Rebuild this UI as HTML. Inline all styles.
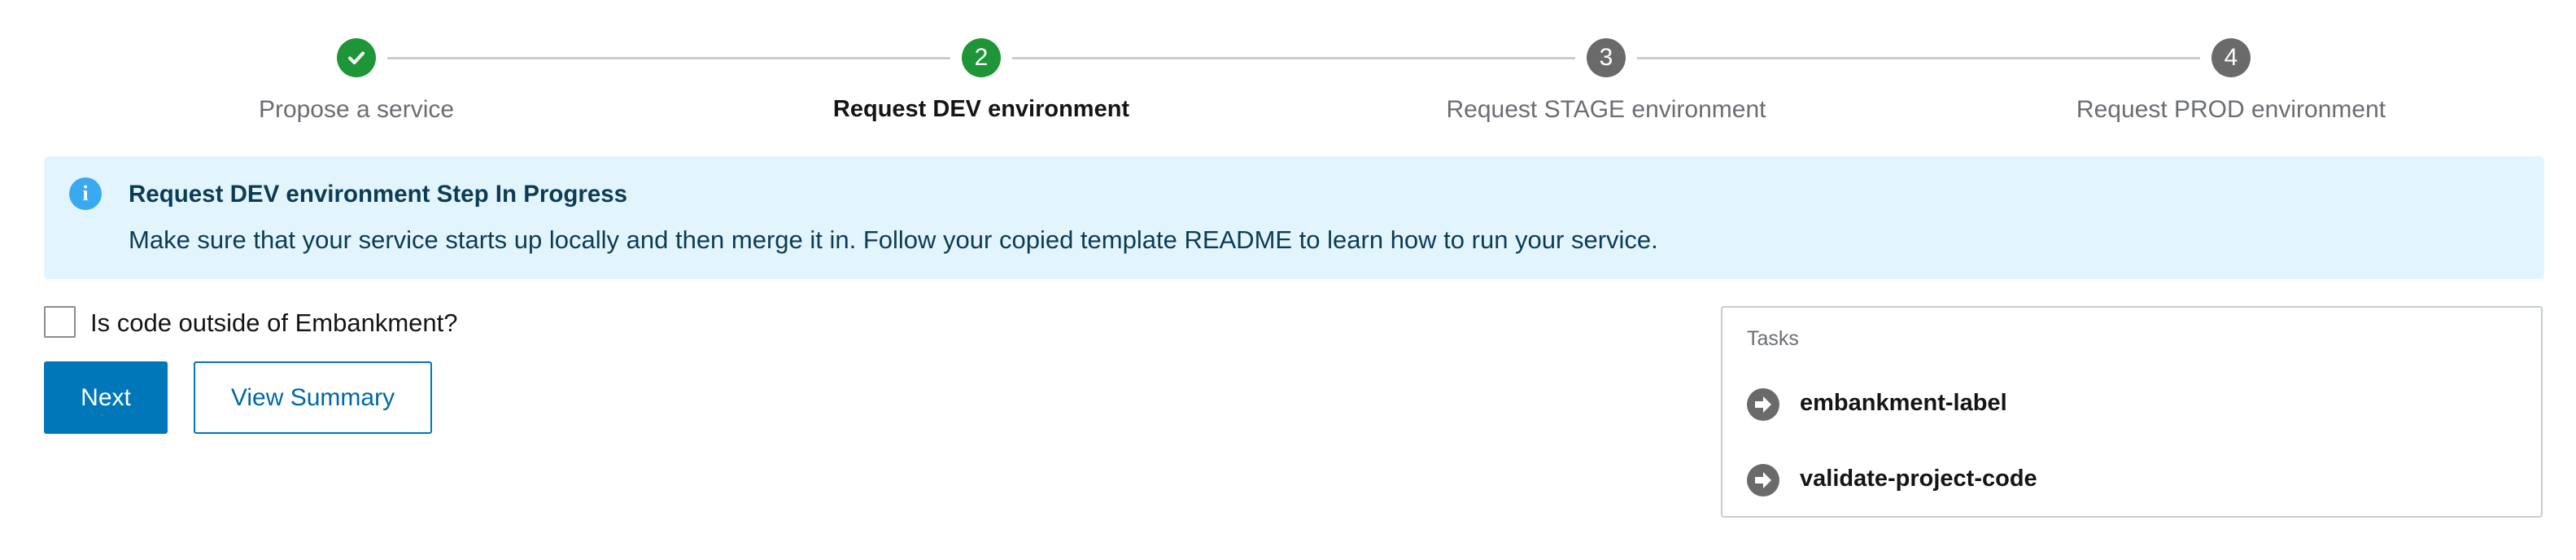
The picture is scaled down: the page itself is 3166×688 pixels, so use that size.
<!DOCTYPE html>
<html><head><meta charset="utf-8"><style>
*{box-sizing:border-box;margin:0;padding:0}
body{width:3166px;height:688px;background:#fff;font-family:"Liberation Sans",sans-serif;position:relative;overflow:hidden}
.abs{position:absolute}
.circ{position:absolute;width:48px;height:48px;border-radius:50%;top:47px;color:#fff;font-size:30px;text-align:center;line-height:48px}
.line{position:absolute;top:70px;height:3px;background:#c9cdd1}
.lbl{position:absolute;top:118px;font-size:30px;color:#6a6e73;transform:translateX(-50%);white-space:nowrap}
</style></head><body>
<div class="line" style="left:476px;width:692px"></div>
<div class="line" style="left:1244px;width:692px"></div>
<div class="line" style="left:2012px;width:692px"></div>
<div class="circ" style="left:414px;background:#1e9637"><svg width="48" height="48" viewBox="0 0 48 48"><path d="M16 24.5l5.5 5.5L32 18.5" fill="none" stroke="#fff" stroke-width="4" stroke-linecap="round" stroke-linejoin="round"/></svg></div>
<div class="circ" style="left:1182px;background:#1e9637">2</div>
<div class="circ" style="left:1950px;background:#6a6a6a">3</div>
<div class="circ" style="left:2718px;background:#6a6a6a">4</div>
<div class="lbl" style="left:438px">Propose a service</div>
<div class="lbl" style="left:1206px;color:#151515;font-weight:bold;font-size:29px">Request DEV environment</div>
<div class="lbl" style="left:1974px">Request STAGE environment</div>
<div class="lbl" style="left:2742px">Request PROD environment</div>

<div class="abs" style="left:54px;top:192px;width:3073px;height:151px;background:#e3f5fc;border-radius:6px"></div>
<div class="abs" style="left:85px;top:218px;width:40px;height:40px;border-radius:50%;background:#3aa9f0;color:#fff;font-weight:bold;font-size:26px;text-align:center;line-height:40px;font-family:'Liberation Serif',serif">i</div>
<div class="abs" style="left:158px;top:222px;font-size:29.5px;font-weight:bold;color:#0c3c55;white-space:nowrap">Request DEV environment Step In Progress</div>
<div class="abs" style="left:158px;top:277px;font-size:31px;color:#0c3c55;white-space:nowrap">Make sure that your service starts up locally and then merge it in. Follow your copied template README to learn how to run your service.</div>

<div class="abs" style="left:54px;top:376px;width:39px;height:39px;border:2px solid #8a8d90;border-radius:2px"></div>
<div class="abs" style="left:111px;top:379px;font-size:31px;color:#151515;white-space:nowrap">Is code outside of Embankment?</div>

<div class="abs" style="left:54px;top:444px;width:152px;height:89px;background:#0077b8;border-radius:3px;color:#fff;font-size:30px;text-align:center;line-height:89px">Next</div>
<div class="abs" style="left:238px;top:444px;width:293px;height:89px;border:2px solid #0077b8;border-radius:3px;color:#0068a8;font-size:30px;text-align:center;line-height:85px">View Summary</div>

<div class="abs" style="left:2115px;top:376px;width:1010px;height:260px;border:2px solid #c4ccd3;border-radius:4px"></div>
<div class="abs" style="left:2147px;top:402px;font-size:25px;color:#6a6e73">Tasks</div>
<div class="abs" style="left:2147px;top:477px"><svg width="40" height="40" viewBox="0 0 40 40"><circle cx="20" cy="20" r="20" fill="#6a6a6a"/><path d="M10 16h10v-6l10 10-10 10v-6H10z" fill="#fff"/></svg></div>
<div class="abs" style="left:2212px;top:479px;font-size:29px;font-weight:bold;color:#151515">embankment-label</div>
<div class="abs" style="left:2147px;top:570px"><svg width="40" height="40" viewBox="0 0 40 40"><circle cx="20" cy="20" r="20" fill="#6a6a6a"/><path d="M10 16h10v-6l10 10-10 10v-6H10z" fill="#fff"/></svg></div>
<div class="abs" style="left:2212px;top:572px;font-size:29px;font-weight:bold;color:#151515">validate-project-code</div>
</body></html>
